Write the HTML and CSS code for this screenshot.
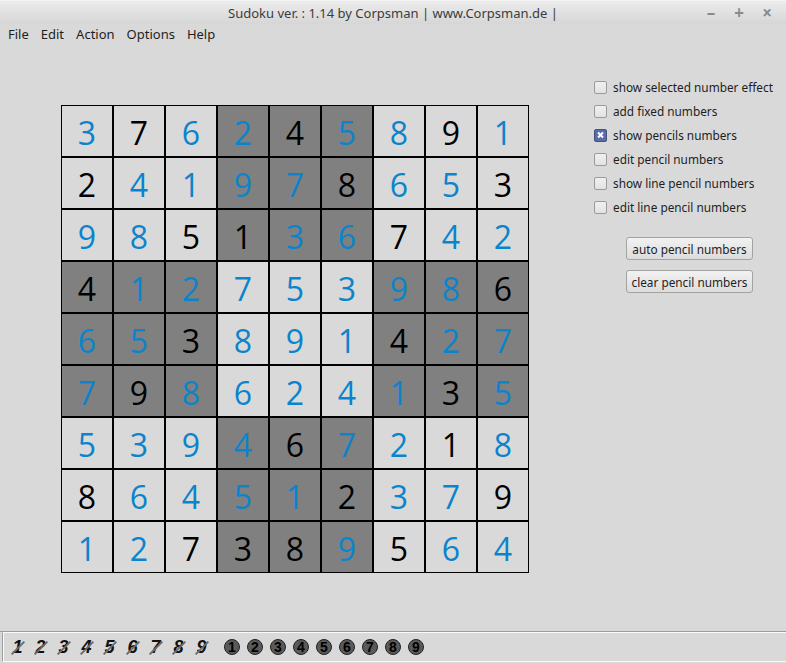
FILE: index.html
```html
<!DOCTYPE html>
<html lang="en">

<head>
    <meta charset="UTF-8">
    <title>Sudoku</title>
    <link rel="stylesheet" href="styles.css">
</head>

<body>
    <div class="window">
        <div class="titlebar">
            <span class="title">Sudoku ver. : 1.14 by Corpsman | www.Corpsman.de |</span>
            <div class="win-buttons">
                <span class="wb">&#8211;</span>
                <span class="wb">+</span>
                <span class="wb">&#215;</span>
            </div>
        </div>

        <div class="menubar">
            <span>File</span>
            <span>Edit</span>
            <span>Action</span>
            <span>Options</span>
            <span>Help</span>
        </div>

        <div class="main">
            <div id="board" class="board"></div>

            <div class="side">
                <label class="check"><span class="box"></span>show selected number effect</label>
                <label class="check"><span class="box"></span>add fixed numbers</label>
                <label class="check"><span class="box checked"></span>show pencils numbers</label>
                <label class="check"><span class="box"></span>edit pencil numbers</label>
                <label class="check"><span class="box"></span>show line pencil numbers</label>
                <label class="check"><span class="box"></span>edit line pencil numbers</label>

                <div class="buttons">
                    <button>auto pencil numbers</button>
                    <button>clear pencil numbers</button>
                </div>
            </div>
        </div>

        <div class="statusbar">
            <div class="status-inner">
                <div id="struck" class="struck-row"></div>
                <div id="dots" class="dot-row"></div>
            </div>
        </div>
    </div>

    <script>
        // b = blue (entered), k = black (fixed)
        const rows = [
            '3b7k6b2b4k5b8b9k1b',
            '2k4b1b9b7b8k6b5b3k',
            '9b8b5k1k3b6b7k4b2b',
            '4k1b2b7b5b3b9b8b6k',
            '6b5b3k8b9b1b4k2b7b',
            '7b9k8b6b2b4b1b3k5b',
            '5b3b9b4b6k7b2b1k8b',
            '8k6b4b5b1b2k3b7b9k',
            '1b2b7k3k8k9b5k6b4b'
        ];
        const board = document.getElementById('board');
        rows.forEach((row, r) => {
            for (let c = 0; c < 9; c++) {
                const cell = document.createElement('div');
                const box = Math.floor(r / 3) * 3 + Math.floor(c / 3);
                cell.className = 'cell' + (box % 2 === 1 ? ' dark' : '');
                cell.classList.add(row[c * 2 + 1] === 'b' ? 'entered' : 'fixed');
                cell.textContent = row[c * 2];
                board.appendChild(cell);
            }
        });

        const struck = document.getElementById('struck');
        const dots = document.getElementById('dots');
        for (let i = 1; i <= 9; i++) {
            const s = document.createElement('span');
            s.className = 'struck';
            s.textContent = i;
            struck.appendChild(s);

            const d = document.createElement('span');
            d.className = 'dot';
            d.textContent = i;
            dots.appendChild(d);
        }
    </script>
</body>

</html>
```

FILE: styles.css
```css
body {
    margin: 0;
    font-family: 'Noto Sans', 'Open Sans', sans-serif;
    background-color: #d9d9d9;
    color: #1e1e1e;
}

.window {
    width: 786px;
    height: 663px;
    display: flex;
    flex-direction: column;
    background-color: #d9d9d9;
    overflow: hidden;
}

.titlebar {
    height: 24px;
    position: relative;
    display: flex;
    align-items: center;
    justify-content: center;
    background: linear-gradient(#ececec, #d6d6d6);
    border-top: 1px solid #f4f4f4;
    box-sizing: border-box;
}

.title {
    font-size: 13px;
    color: #3c3c3c;
}

.win-buttons {
    position: absolute;
    right: 12px;
    top: 2px;
    display: flex;
    gap: 14px;
}

.wb {
    width: 14px;
    text-align: center;
    font-size: 17px;
    font-weight: bold;
    color: #8a8a8a;
    line-height: 20px;
}

.menubar {
    height: 20px;
    display: flex;
    align-items: center;
    gap: 12px;
    padding-left: 8px;
    font-size: 13px;
    color: #1e1e1e;
}

.main {
    flex: 1;
    display: flex;
    padding-top: 61px;
    padding-left: 61px;
}

.board {
    display: grid;
    grid-template-columns: repeat(9, 52px);
    grid-template-rows: repeat(9, 52px);
    width: 468px;
    height: 468px;
}

.cell {
    box-sizing: border-box;
    border: 1px solid #000;
    background-color: #d9d9d9;
    display: flex;
    align-items: center;
    justify-content: center;
    font-family: 'Open Sans', 'Noto Sans', sans-serif;
    font-size: 32px;
    padding-top: 2px;
}

.cell.dark {
    background-color: #808080;
}

.cell.entered {
    color: #0a84cc;
}

.cell.fixed {
    color: #000;
}

.side {
    margin-left: 65px;
    margin-top: -30px;
    display: flex;
    flex-direction: column;
}

.check {
    display: flex;
    align-items: center;
    height: 24px;
    font-size: 11.8px;
    color: #1e1e1e;
}

.box {
    width: 11px;
    height: 11px;
    border: 1px solid #9a9a9a;
    border-radius: 2px;
    background: linear-gradient(#f0f0f0, #e2e2e2);
    margin-right: 6px;
    position: relative;
}

.box.checked {
    background: #5b6aa8;
    border-color: #44507e;
}

.box.checked::before,
.box.checked::after {
    content: '';
    position: absolute;
    left: 2px;
    top: 4.5px;
    width: 7px;
    height: 2px;
    background: #fff;
    transform: rotate(45deg);
}

.box.checked::after {
    transform: rotate(-45deg);
}

.buttons {
    margin-top: 18px;
    margin-left: 32px;
    display: flex;
    flex-direction: column;
    gap: 10px;
}

button {
    width: 127px;
    height: 23px;
    font-family: 'Noto Sans', 'Open Sans', sans-serif;
    font-size: 11.8px;
    color: #1e1e1e;
    background: linear-gradient(#f2f2f2, #dcdcdc);
    border: 1px solid #a3a3a3;
    border-radius: 3px;
    padding: 0;
}

.statusbar {
    height: 32px;
    border-top: 1px solid #9c9c9c;
    box-sizing: border-box;
    padding: 0 0 1px 2px;
}

.status-inner {
    height: 100%;
    box-sizing: border-box;
    border: 1px solid #fafafa;
    border-left: 1px solid #9c9c9c;
    border-right: none;
    box-shadow: inset 1px 0 0 #fafafa;
    display: flex;
    align-items: center;
    padding-left: 6px;
}

.struck-row,
.dot-row {
    display: flex;
    gap: 6px;
}

.dot-row {
    margin-left: 14px;
    gap: 7px;
}

.struck {
    position: relative;
    width: 17px;
    text-align: center;
    font-family: 'Liberation Sans', sans-serif;
    font-size: 18px;
    font-weight: bold;
    font-style: italic;
    color: #111;
    line-height: 20px;
}

.struck::after {
    content: '';
    position: absolute;
    left: 0;
    top: 10px;
    width: 18px;
    height: 2px;
    background: #6a6a6a;
    transform: rotate(-45deg);
}

.dot {
    width: 14px;
    height: 14px;
    border-radius: 50%;
    border: 1px solid #222;
    background: #5a5a5a;
    display: flex;
    align-items: center;
    justify-content: center;
    font-family: 'Liberation Sans', sans-serif;
    font-size: 14px;
    font-weight: bold;
    color: #000;
}
```
